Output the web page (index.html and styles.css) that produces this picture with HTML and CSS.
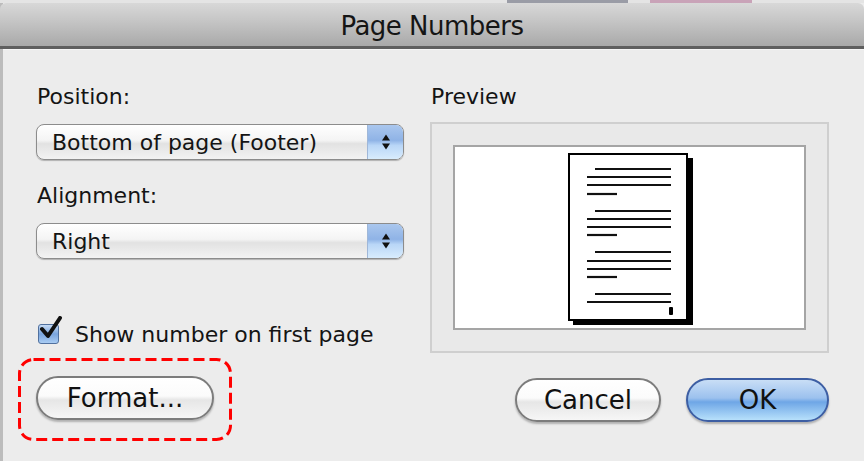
FILE: index.html
```html
<!DOCTYPE html>
<html>
<head>
<meta charset="utf-8">
<link rel="stylesheet" href="styles.css">
</head>
<body>
<div class="window">
  <div class="topstrip"><span class="bit gray"></span><span class="bit pink"></span></div>
  <div class="titlebar"><span class="title">Page Numbers</span></div>
  <div class="content">
    <div class="left">
      <div class="label">Position:</div>
      <div class="select">
        <span class="select-text">Bottom of page (Footer)</span>
        <span class="stepper"><svg width="12" height="20" viewBox="0 0 12 20"><path d="M6 2.5 L10 8.5 L2 8.5 Z" fill="#111"/><path d="M2 11.5 L10 11.5 L6 17.5 Z" fill="#111"/></svg></span>
      </div>
      <div class="label label-2">Alignment:</div>
      <div class="select">
        <span class="select-text">Right</span>
        <span class="stepper"><svg width="12" height="20" viewBox="0 0 12 20"><path d="M6 2.5 L10 8.5 L2 8.5 Z" fill="#111"/><path d="M2 11.5 L10 11.5 L6 17.5 Z" fill="#111"/></svg></span>
      </div>
      <div class="check-row">
        <span class="checkbox">
          <svg class="tick" width="26" height="26" viewBox="0 0 26 26"><path d="M4 13 L10 20 L22 2" fill="none" stroke="#111" stroke-width="4" stroke-linecap="round" stroke-linejoin="round"/></svg>
        </span>
        <span class="check-label">Show number on first page</span>
      </div>
      <div class="format-wrap">
        <svg class="dash" width="214" height="83" viewBox="0 0 214 83"><rect x="1.5" y="1.5" width="211" height="80" rx="14" ry="14" fill="none" stroke="#ff0000" stroke-width="3" stroke-dasharray="11 5"/></svg>
        <button class="btn">Format...</button>
      </div>
    </div>
    <div class="right">
      <div class="label">Preview</div>
      <div class="preview-box">
        <div class="preview-inner">
          <svg width="126" height="172" viewBox="0 0 126 172">
            <rect x="5" y="5" width="120" height="167" fill="#000"/>
            <rect x="1" y="1" width="118" height="166" fill="#fff" stroke="#000" stroke-width="2"/>
            <g stroke="#111" stroke-width="2.2">
              <line x1="27" y1="16" x2="103" y2="16"/>
              <line x1="19" y1="24" x2="103" y2="24"/>
              <line x1="19" y1="32" x2="103" y2="32"/>
              <line x1="19" y1="41" x2="49" y2="41"/>
              <line x1="27" y1="58" x2="103" y2="58"/>
              <line x1="19" y1="66" x2="103" y2="66"/>
              <line x1="19" y1="74" x2="103" y2="74"/>
              <line x1="19" y1="82" x2="49" y2="82"/>
              <line x1="27" y1="99" x2="103" y2="99"/>
              <line x1="19" y1="108" x2="103" y2="108"/>
              <line x1="19" y1="116" x2="103" y2="116"/>
              <line x1="19" y1="124" x2="49" y2="124"/>
              <line x1="27" y1="141" x2="103" y2="141"/>
              <line x1="19" y1="149" x2="103" y2="149"/>
            </g>
            <rect x="101" y="154" width="4" height="8" rx="1" fill="#000"/>
          </svg>
        </div>
      </div>
      <div class="buttons">
        <button class="btn cancel">Cancel</button>
        <button class="btn ok">OK</button>
      </div>
    </div>
  </div>
</div>
</body>
</html>
```

FILE: styles.css
```css
html, body {
  margin: 0;
  padding: 0;
  width: 864px;
  height: 461px;
  overflow: hidden;
  background: #ececec;
}

.window {
  width: 864px;
  height: 461px;
  box-sizing: border-box;
  border-left: 3px solid #bcbcbc;
  background: #ececec;
  font-family: "DejaVu Sans", "Liberation Sans", sans-serif;
  color: #141414;
}

.topstrip {
  height: 3px;
  background: #e4e4e4;
  display: flex;
  margin-left: -3px;
}
.bit {
  height: 3px;
  display: block;
}
.bit.gray {
  width: 121px;
  margin-left: 507px;
  background: #9a9ca6;
}
.bit.pink {
  width: 102px;
  margin-left: 22px;
  background: #c9a3b8;
}

.titlebar {
  height: 43px;
  margin-left: -3px;
  border-top-left-radius: 6px;
  border-top-right-radius: 6px;
  background: linear-gradient(#d8d8d8, #c6c6c6 40%, #a9a9a9);
  border-bottom: 3px solid #5f5f5f;
  display: flex;
  align-items: center;
  justify-content: center;
}
.title {
  font-size: 26px;
  letter-spacing: -0.5px;
  color: #151515;
  padding-top: 2px;
  padding-left: 0;
}

.content {
  display: grid;
  grid-template-columns: 368px 399px;
  column-gap: 26px;
  padding-left: 33px;
  padding-top: 35px;
  border-top: 1px solid #f6f6f6;
}

.label {
  font-size: 22px;
  line-height: 24px;
  height: 24px;
  padding-left: 1px;
}
.label-2 {
  margin-top: 24px;
}

.select {
  margin-top: 15px;
  height: 36px;
  box-sizing: border-box;
  border: 1px solid #8c8c8c;
  border-radius: 8px;
  background: linear-gradient(#ffffff, #f4f4f4 45%, #e2e2e2 55%, #f3f3f3);
  box-shadow: 0 1px 1px rgba(0,0,0,0.25);
  display: flex;
  align-items: center;
  overflow: hidden;
}
.select-text {
  flex: 1;
  padding-left: 15px;
  font-size: 22px;
  white-space: nowrap;
}
.stepper {
  width: 35px;
  height: 100%;
  background: linear-gradient(#aac7ee, #8fb3e6 45%, #b9d6f7 60%, #d8ecfd);
  border-left: 1px solid #9fb7d8;
  display: flex;
  align-items: center;
  justify-content: center;
}

.check-row {
  margin-top: 63px;
  height: 24px;
  display: flex;
  align-items: center;
}
.checkbox {
  position: relative;
  width: 21px;
  height: 20px;
  margin-left: 2px;
  box-sizing: border-box;
  border: 1px solid #51719f;
  border-radius: 3px;
  background: linear-gradient(#c7dcf5, #7aa5de 50%, #a9ccf3);
  flex: none;
}
.tick {
  position: absolute;
  left: -1px;
  top: -9px;
}
.check-label {
  margin-left: 16px;
  font-size: 22px;
  white-space: nowrap;
}

.format-wrap {
  position: relative;
  margin-top: 12px;
  margin-left: -18px;
  width: 214px;
  height: 83px;
  box-sizing: border-box;
  padding: 18px 0 0 18px;
}
.dash {
  position: absolute;
  left: 0;
  top: 0;
}

.btn {
  font-family: "DejaVu Sans", "Liberation Sans", sans-serif;
  font-size: 26px;
  color: #111;
  height: 44px;
  width: 178px;
  box-sizing: border-box;
  border: 2px solid #7c7c7c;
  border-radius: 22px;
  background: linear-gradient(#ffffff, #fbfbfb 45%, #e6e6e6 55%, #f6f6f6);
  box-shadow: 0 2px 2px rgba(0,0,0,0.25);
  padding: 0;
  margin: 0;
  line-height: 40px;
}

.preview-box {
  margin-top: 13px;
  width: 399px;
  height: 231px;
  box-sizing: border-box;
  border: 2px solid #cfcfcf;
  background: #e9e9e9;
  padding: 21px;
}
.preview-inner {
  width: 353px;
  height: 185px;
  box-sizing: border-box;
  border: 2px solid #a5a5a5;
  background: #fff;
  display: flex;
  justify-content: center;
  padding-top: 6px;
  padding-left: 2px;
}

.buttons {
  margin-top: 25px;
  display: flex;
  justify-content: flex-end;
  gap: 25px;
}
.cancel {
  width: 146px;
}
.ok {
  width: 143px;
  border-color: #3d5ea3;
  background: linear-gradient(#c9def6, #9cc1ee 45%, #6ea6e6 55%, #b7e0fb);
}
```
